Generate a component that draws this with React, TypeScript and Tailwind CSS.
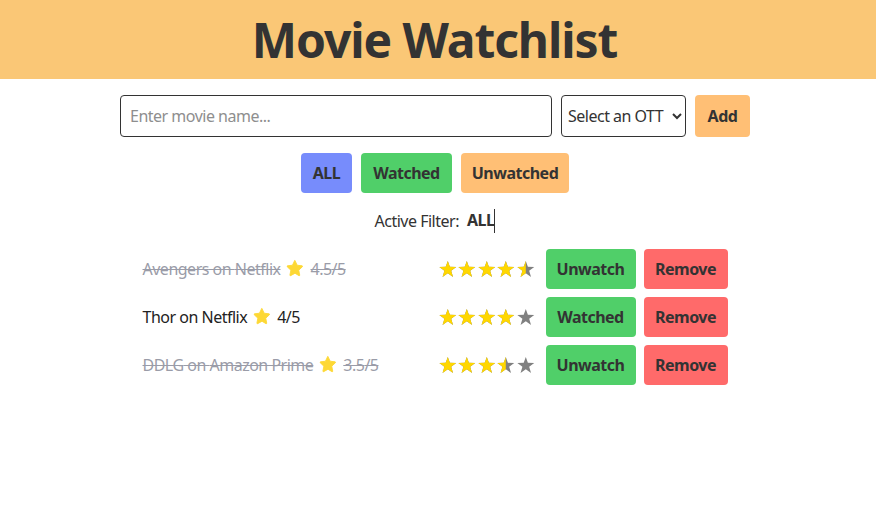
import React from "react";

const font = { fontFamily: '"Noto Sans", "Open Sans", sans-serif' };

function Emoji() {
  return (
    <svg width="18" height="18" viewBox="0 0 24 24" className="inline-block mx-[6px] align-[-2px]">
      <path
        d="M12 2.2l2.9 6.1 6.6.8c.6.1.8.8.4 1.2l-4.9 4.6 1.3 6.6c.1.6-.5 1-1 .7L12 19l-5.8 3.2c-.5.3-1.1-.1-1-.7l1.3-6.6-4.9-4.6c-.4-.4-.2-1.1.4-1.2l6.6-.8L11.5 2.2c.2-.5.8-.5.5 0z"
        fill="#fdd835"
        stroke="#fdd835"
        strokeWidth="1.2"
        strokeLinejoin="round"
      />
    </svg>
  );
}

const STAR = "10,1 12.35,7.6 19.5,7.8 13.8,12.1 15.9,19 10,14.9 4.1,19 6.2,12.1 0.5,7.8 7.65,7.6";

function Stars({ rating, id }: { rating: number; id: string }) {
  return (
    <div className="flex">
      {[1, 2, 3, 4, 5].map((i) => {
        const fill = Math.max(0, Math.min(1, rating - (i - 1)));
        const cid = `${id}-${i}`;
        return (
          <svg key={i} width="19.6" height="20" viewBox="-1 -1 22 22" className="block">
            <defs>
              <clipPath id={cid}>
                <rect x="-1" y="-1" width={1 + 20 * fill} height="22" />
              </clipPath>
            </defs>
            <polygon points={STAR} fill="#808080" />
            <polygon points={STAR} fill="#ffd700" clipPath={`url(#${cid})`} />
          </svg>
        );
      })}
    </div>
  );
}

const movies = [
  { name: "Avengers", ott: "Netflix", rating: 4.5, watched: true },
  { name: "Thor", ott: "Netflix", rating: 4, watched: false },
  { name: "DDLG", ott: "Amazon Prime", rating: 3.5, watched: true },
];

export default function App() {
  return (
    <div className="min-h-[524px] bg-white text-[#333] tracking-[-0.5px]" style={font}>
      <div className="h-[79px] bg-[#fac776] flex items-center justify-center pr-[7px]">
        <h1 className="text-[48px] font-bold leading-none text-[#333] tracking-[-1.1px]">Movie Watchlist</h1>
      </div>
      <div className="pr-[6px]">
        <div className="flex justify-center items-center gap-[9px] mt-[16px]">
          <input
            placeholder="Enter movie name..."
            className="w-[432px] h-[42px] border border-[#333] rounded-[4px] px-[9px] text-[16px] placeholder:text-[#8e8e8e] outline-none"
          />
          <select className="w-[125px] h-[42px] border border-[#333] rounded-[4px] px-[2px] text-[16px] bg-white text-[#333]">
            <option>Select an OTT</option>
          </select>
          <button className="h-[42px] w-[55px] rounded-[4px] bg-[#ffbf75] font-bold text-[16px] text-[#333]">Add</button>
        </div>
        <div className="flex justify-center gap-[9px] mt-[16px]">
          <button className="h-[40px] w-[51px] rounded-[4px] bg-[#778cfc] font-bold text-[16px]">ALL</button>
          <button className="h-[40px] w-[91px] rounded-[4px] bg-[#50cf69] font-bold text-[16px]">Watched</button>
          <button className="h-[40px] w-[108px] rounded-[4px] bg-[#ffbf75] font-bold text-[16px]">Unwatched</button>
        </div>
        <div className="flex justify-center mt-[16px] text-[16px] leading-[24px]">
          <span>Active Filter:</span>
          <span className="ml-[8px] font-bold border-r border-[#333] leading-[22px]">ALL</span>
        </div>
        <div className="w-[585px] mx-auto mt-[16px] flex flex-col gap-[8px]">
          {movies.map((m) => (
            <div key={m.name} className="flex items-center h-[40px]">
              <div
                className={`flex-1 text-[16px] ${m.watched ? "line-through text-[#9a9ca8]" : "text-[#222]"}`}
              >
                {m.name} on {m.ott}
                <Emoji />
                {m.rating}/5
              </div>
              <Stars rating={m.rating} id={m.name} />
              <button
                className="ml-[10px] h-[40px] w-[90px] rounded-[4px] bg-[#50cf69] font-bold text-[16px] text-[#333]"
              >
                {m.watched ? "Unwatch" : "Watched"}
              </button>
              <button className="ml-[8px] h-[40px] w-[84px] rounded-[4px] bg-[#ff6a6a] font-bold text-[16px] text-[#333]">
                Remove
              </button>
            </div>
          ))}
        </div>
      </div>
    </div>
  );
}
